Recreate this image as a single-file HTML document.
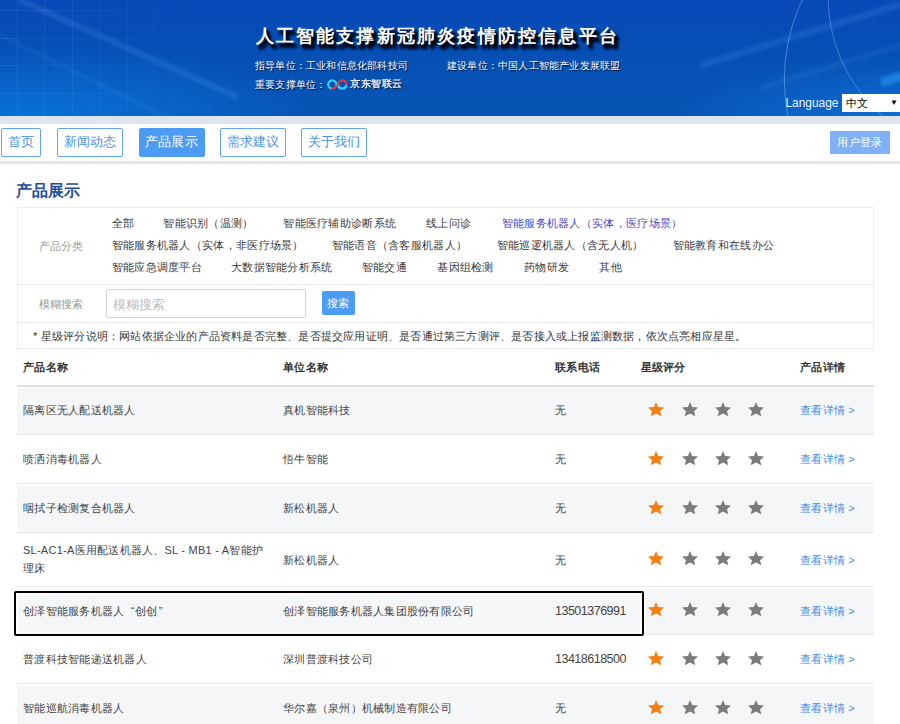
<!DOCTYPE html>
<html><head><meta charset="utf-8">
<style>
*{margin:0;padding:0;box-sizing:border-box}
html,body{width:900px;height:724px;overflow:hidden;background:#fff;font-family:"Liberation Sans",sans-serif;color:#333;position:relative}
#hdr{position:absolute;left:0;top:0;width:900px;height:116px;overflow:hidden;
 background:radial-gradient(ellipse 280px 75px at 30px 118px,rgba(10,120,225,.8),rgba(10,120,225,0)),radial-gradient(ellipse 220px 60px at 900px 116px,rgba(20,130,235,.55),rgba(20,130,235,0)),linear-gradient(180deg,#0848b8 0%,#0650b4 50%,#0656b6 100%)}
.gv{position:absolute;top:0;width:1px;height:116px;background:rgba(110,180,255,.14)}
.gh{position:absolute;left:0;width:200px;height:1px;background:linear-gradient(90deg,rgba(110,180,255,.14),rgba(110,180,255,0))}
.streak{position:absolute;height:4px;background:rgba(110,180,255,.16);filter:blur(1.5px);transform-origin:0 0}
.t{position:absolute;left:255.5px;top:22px;font-size:18px;letter-spacing:2.2px;font-weight:bold;color:#fff;text-shadow:4px 5px 3px #000614,3px 4px 3px #000614,2px 3px 2px rgba(0,0,20,.9);white-space:nowrap;line-height:28px}
.s{position:absolute;font-family:"Liberation Serif",serif;font-weight:500;font-size:10px;letter-spacing:.2px;color:#fff;white-space:nowrap;text-shadow:1px 1px 1px #001030;line-height:14px}
#lang{position:absolute;left:785.5px;top:95px;font-size:11.9px;color:#eef4ff;line-height:16px}
#sel{position:absolute;left:842px;top:94px;width:58px;height:18px;background:#fff;font-size:11px;color:#000;padding-left:4px;line-height:18px}
#strip{position:absolute;left:0;top:116px;width:900px;height:7.5px;background:#dfe5ee}
#navb{position:absolute;left:0;top:160.5px;width:900px;height:3.5px;background:#e2e7ee}
.nb{position:absolute;top:128px;height:28.5px;border:1px solid #62a4f2;border-radius:2px;color:#4a90e2;font-size:13px;letter-spacing:.2px;line-height:26px;text-align:center;white-space:nowrap}
.nb.on{background:#4d9cf3;border-color:#4d9cf3;color:#fff}
#login{position:absolute;left:830px;top:131px;width:60px;height:23px;background:#80b1f4;color:#fff;font-size:11px;letter-spacing:.3px;line-height:23px;text-align:center}
h2{position:absolute;left:16px;top:180px;font-size:16px;line-height:22px;color:#1f4f9a;font-weight:bold}
.box{position:absolute;left:17px;width:857px;border:1px solid #ececec}
.lbl{position:absolute;left:38.5px;font-size:11px;letter-spacing:.3px;color:#999;line-height:16px}
.cat{position:absolute;font-size:11px;letter-spacing:.3px;color:#3a3a3a;white-space:nowrap;line-height:16px}
.cat.sel{color:#4848cc}
#inp{position:absolute;left:106px;top:289px;width:199.5px;height:28.5px;border:1px solid #d2d3da;border-radius:2px;font-size:13px;color:#bbb;padding-left:6px;padding-top:2px;line-height:26px}
#btn{position:absolute;left:322px;top:291px;width:33px;height:24px;background:#4b9cf4;border-radius:2px;color:#fff;font-size:11px;letter-spacing:.3px;text-align:center;line-height:24px}
.note{position:absolute;left:33px;top:328px;font-size:11px;letter-spacing:.2px;color:#333;white-space:nowrap;line-height:16px}
.tr{position:absolute;left:17px;width:857px;border-bottom:1px solid #e8e8e8}
.tr.g{background:linear-gradient(#fff 0,#fff 2px,#f5f6f8 2px)}
.td{position:absolute;font-size:11px;letter-spacing:.25px;color:#444;white-space:nowrap;line-height:16px}
.th{position:absolute;top:359px;font-size:11px;letter-spacing:.3px;color:#333;font-weight:bold;line-height:16px}
.sw{position:absolute;width:17px;height:16px}
.sw svg{display:block}
.lk{color:#3f8dea}
.num{font-size:12.5px;letter-spacing:-.5px}
#hl{position:absolute;left:14px;top:591px;width:629.5px;height:44.5px;border:2.5px solid #000;border-radius:2px;box-shadow:0 0 0 1.5px rgba(255,255,255,.85),inset 0 0 0 1.5px rgba(255,255,255,.85)}
</style></head><body>
<div id="hdr">
 <div class="gv" style="left:16.7px;opacity:1"></div><div class="gv" style="left:44.2px;opacity:0.95"></div><div class="gv" style="left:71.7px;opacity:0.85"></div><div class="gv" style="left:99.2px;opacity:0.7"></div><div class="gv" style="left:126.7px;opacity:0.5"></div><div class="gv" style="left:154.2px;opacity:0.35"></div><div class="gv" style="left:181.7px;opacity:0.2"></div><div class="gv" style="left:209.2px;opacity:0.1"></div><div class="gh" style="top:9.7px"></div><div class="gh" style="top:37.5px"></div><div class="gh" style="top:65.2px"></div><div class="gh" style="top:93.0px"></div>
 <div class="streak" style="left:20px;top:-3px;width:240px;height:6px;transform:rotate(24deg)"></div>
 <div class="streak" style="left:-10px;top:28px;width:200px;height:5px;transform:rotate(26deg);opacity:.5"></div>
 <div class="streak" style="left:700px;top:62px;width:230px;transform:rotate(-17deg);height:7px;opacity:.9"></div>
 <div class="streak" style="left:760px;top:85px;width:170px;transform:rotate(-17deg);height:6px;opacity:.6"></div>
 <div class="streak" style="left:880px;top:78px;width:40px;transform:rotate(-17deg);height:9px;background:rgba(40,150,245,.6)"></div>
 <svg style="position:absolute;left:0;top:0" width="900" height="116">
  <circle cx="973" cy="80" r="188.7" fill="none" stroke="rgba(150,200,255,.45)" stroke-width="1"/>
  <circle cx="986" cy="-3.5" r="158" fill="none" stroke="rgba(150,200,255,.4)" stroke-width="1"/>
 </svg>
 <div class="t">人工智能支撑新冠肺炎疫情防控信息平台</div>
 <div class="s" style="left:255px;top:58.5px">指导单位：工业和信息化部科技司</div>
 <div class="s" style="left:447px;top:58.5px">建设单位：中国人工智能产业发展联盟</div>
 <div class="s" style="left:255px;top:77.5px">重要支撑单位：</div>
 <svg style="position:absolute;left:327px;top:79px" width="22" height="11" viewBox="0 0 22 11">
  <path d="M4.59 9.54 A4.1 4.1 0 1 1 9.34 6.21" fill="none" stroke="#2fd3f2" stroke-width="2.2"/>
  <path d="M9.34 6.21 A4.1 4.1 0 0 1 4.59 9.54" fill="none" stroke="#e9343f" stroke-width="2.2"/>
  <path d="M11.26 6.21 A4.1 4.1 0 1 1 19.34 6.21" fill="none" stroke="#e9343f" stroke-width="2.2"/>
  <path d="M19.34 6.21 A4.1 4.1 0 0 1 11.26 6.21" fill="none" stroke="#2fd3f2" stroke-width="2.2"/>
 </svg>
 <div class="s" style="left:350px;top:77px;font-family:'Liberation Sans',sans-serif;font-size:10px;letter-spacing:.6px;font-weight:bold;color:#e8f0ff">京东智联云</div>
 <div id="lang">Language</div>
 <div id="sel">中文<span style="position:absolute;left:48px;top:0;font-size:8px">▼</span></div>
</div>
<div id="strip"></div>
<div class="nb" style="left:1px;width:40px">首页</div>
<div class="nb" style="left:57px;width:66px">新闻动态</div>
<div class="nb on" style="left:138.5px;width:66px">产品展示</div>
<div class="nb" style="left:220px;width:66px">需求建议</div>
<div class="nb" style="left:301px;width:66px">关于我们</div>
<div id="login">用户登录</div>
<div id="navb"></div>
<h2>产品展示</h2>
<div class="box" style="top:207px;height:142px"></div>
<div style="position:absolute;left:18px;top:284px;width:855px;height:1px;background:#ececec"></div>
<div style="position:absolute;left:18px;top:322px;width:855px;height:1px;background:#ececec"></div>
<div class="lbl" style="top:238px">产品分类</div>
<div class="cat" style="left:111.7px;top:215px">全部</div>
<div class="cat" style="left:163.3px;top:215px">智能识别（温测）</div>
<div class="cat" style="left:283.3px;top:215px">智能医疗辅助诊断系统</div>
<div class="cat" style="left:426px;top:215px">线上问诊</div>
<div class="cat sel" style="left:501.7px;top:215px">智能服务机器人（实体，医疗场景）</div>
<div class="cat" style="left:111.7px;top:237px">智能服务机器人（实体，非医疗场景）</div>
<div class="cat" style="left:331.7px;top:237px">智能语音（含客服机器人）</div>
<div class="cat" style="left:496.7px;top:237px">智能巡逻机器人（含无人机）</div>
<div class="cat" style="left:672.5px;top:237px">智能教育和在线办公</div>
<div class="cat" style="left:111.7px;top:259px">智能应急调度平台</div>
<div class="cat" style="left:231px;top:259px">大数据智能分析系统</div>
<div class="cat" style="left:361.7px;top:259px">智能交通</div>
<div class="cat" style="left:437.3px;top:259px">基因组检测</div>
<div class="cat" style="left:524px;top:259px">药物研发</div>
<div class="cat" style="left:599.3px;top:259px">其他</div>
<div class="lbl" style="top:296px">模糊搜索</div>
<div id="inp">模糊搜索</div>
<div id="btn">搜索</div>
<div class="note">* 星级评分说明：网站依据企业的产品资料是否完整、是否提交应用证明、是否通过第三方测评、是否接入或上报监测数据，依次点亮相应星星。</div>
<div class="th" style="left:23px">产品名称</div>
<div class="th" style="left:283px">单位名称</div>
<div class="th" style="left:555px">联系电话</div>
<div class="th" style="left:640.5px">星级评分</div>
<div class="th" style="left:800px">产品详情</div>
<div class="tr g" style="top:386px;height:49px"><div class="td" style="left:6px;top:16.0px">隔离区无人配送机器人</div><div class="td" style="left:266px;top:16.0px">真机智能科技</div><div class="td" style="left:538px;top:16.0px">无</div><div class="sw" style="left:631.0px;top:15.7px"><svg viewBox="0 0 16 14.5" width="16" height="14.5"><polygon points="8,0 10.1,5 16,5.4 12,9.3 13.3,14.3 8,11.6 2.7,14.3 4,9.3 0,5.4 5.9,5" fill="#f67f12"/></svg></div><div class="sw" style="left:664.6px;top:15.7px"><svg viewBox="0 0 16 14.5" width="16" height="14.5"><polygon points="8,0 10.1,5 16,5.4 12,9.3 13.3,14.3 8,11.6 2.7,14.3 4,9.3 0,5.4 5.9,5" fill="#7c7c7c"/></svg></div><div class="sw" style="left:698.0px;top:15.7px"><svg viewBox="0 0 16 14.5" width="16" height="14.5"><polygon points="8,0 10.1,5 16,5.4 12,9.3 13.3,14.3 8,11.6 2.7,14.3 4,9.3 0,5.4 5.9,5" fill="#7c7c7c"/></svg></div><div class="sw" style="left:731.4px;top:15.7px"><svg viewBox="0 0 16 14.5" width="16" height="14.5"><polygon points="8,0 10.1,5 16,5.4 12,9.3 13.3,14.3 8,11.6 2.7,14.3 4,9.3 0,5.4 5.9,5" fill="#7c7c7c"/></svg></div><div class="td lk" style="left:783px;top:16.0px">查看详情 &gt;</div></div>
<div class="tr" style="top:435px;height:49px"><div class="td" style="left:6px;top:16.0px">喷洒消毒机器人</div><div class="td" style="left:266px;top:16.0px">悟牛智能</div><div class="td" style="left:538px;top:16.0px">无</div><div class="sw" style="left:631.0px;top:15.7px"><svg viewBox="0 0 16 14.5" width="16" height="14.5"><polygon points="8,0 10.1,5 16,5.4 12,9.3 13.3,14.3 8,11.6 2.7,14.3 4,9.3 0,5.4 5.9,5" fill="#f67f12"/></svg></div><div class="sw" style="left:664.6px;top:15.7px"><svg viewBox="0 0 16 14.5" width="16" height="14.5"><polygon points="8,0 10.1,5 16,5.4 12,9.3 13.3,14.3 8,11.6 2.7,14.3 4,9.3 0,5.4 5.9,5" fill="#7c7c7c"/></svg></div><div class="sw" style="left:698.0px;top:15.7px"><svg viewBox="0 0 16 14.5" width="16" height="14.5"><polygon points="8,0 10.1,5 16,5.4 12,9.3 13.3,14.3 8,11.6 2.7,14.3 4,9.3 0,5.4 5.9,5" fill="#7c7c7c"/></svg></div><div class="sw" style="left:731.4px;top:15.7px"><svg viewBox="0 0 16 14.5" width="16" height="14.5"><polygon points="8,0 10.1,5 16,5.4 12,9.3 13.3,14.3 8,11.6 2.7,14.3 4,9.3 0,5.4 5.9,5" fill="#7c7c7c"/></svg></div><div class="td lk" style="left:783px;top:16.0px">查看详情 &gt;</div></div>
<div class="tr g" style="top:484px;height:49px"><div class="td" style="left:6px;top:16.0px">咽拭子检测复合机器人</div><div class="td" style="left:266px;top:16.0px">新松机器人</div><div class="td" style="left:538px;top:16.0px">无</div><div class="sw" style="left:631.0px;top:15.7px"><svg viewBox="0 0 16 14.5" width="16" height="14.5"><polygon points="8,0 10.1,5 16,5.4 12,9.3 13.3,14.3 8,11.6 2.7,14.3 4,9.3 0,5.4 5.9,5" fill="#f67f12"/></svg></div><div class="sw" style="left:664.6px;top:15.7px"><svg viewBox="0 0 16 14.5" width="16" height="14.5"><polygon points="8,0 10.1,5 16,5.4 12,9.3 13.3,14.3 8,11.6 2.7,14.3 4,9.3 0,5.4 5.9,5" fill="#7c7c7c"/></svg></div><div class="sw" style="left:698.0px;top:15.7px"><svg viewBox="0 0 16 14.5" width="16" height="14.5"><polygon points="8,0 10.1,5 16,5.4 12,9.3 13.3,14.3 8,11.6 2.7,14.3 4,9.3 0,5.4 5.9,5" fill="#7c7c7c"/></svg></div><div class="sw" style="left:731.4px;top:15.7px"><svg viewBox="0 0 16 14.5" width="16" height="14.5"><polygon points="8,0 10.1,5 16,5.4 12,9.3 13.3,14.3 8,11.6 2.7,14.3 4,9.3 0,5.4 5.9,5" fill="#7c7c7c"/></svg></div><div class="td lk" style="left:783px;top:16.0px">查看详情 &gt;</div></div>
<div class="tr" style="top:533px;height:54px"><div class="td" style="left:6px;top:9.0px;line-height:17.5px">SL-AC1-A医用配送机器人、SL - MB1 - A智能护<br>理床</div><div class="td" style="left:266px;top:18.5px">新松机器人</div><div class="td" style="left:538px;top:18.5px">无</div><div class="sw" style="left:631.0px;top:18.2px"><svg viewBox="0 0 16 14.5" width="16" height="14.5"><polygon points="8,0 10.1,5 16,5.4 12,9.3 13.3,14.3 8,11.6 2.7,14.3 4,9.3 0,5.4 5.9,5" fill="#f67f12"/></svg></div><div class="sw" style="left:664.6px;top:18.2px"><svg viewBox="0 0 16 14.5" width="16" height="14.5"><polygon points="8,0 10.1,5 16,5.4 12,9.3 13.3,14.3 8,11.6 2.7,14.3 4,9.3 0,5.4 5.9,5" fill="#7c7c7c"/></svg></div><div class="sw" style="left:698.0px;top:18.2px"><svg viewBox="0 0 16 14.5" width="16" height="14.5"><polygon points="8,0 10.1,5 16,5.4 12,9.3 13.3,14.3 8,11.6 2.7,14.3 4,9.3 0,5.4 5.9,5" fill="#7c7c7c"/></svg></div><div class="sw" style="left:731.4px;top:18.2px"><svg viewBox="0 0 16 14.5" width="16" height="14.5"><polygon points="8,0 10.1,5 16,5.4 12,9.3 13.3,14.3 8,11.6 2.7,14.3 4,9.3 0,5.4 5.9,5" fill="#7c7c7c"/></svg></div><div class="td lk" style="left:783px;top:18.5px">查看详情 &gt;</div></div>
<div class="tr g" style="top:587px;height:48px"><div class="td" style="left:6px;top:15.5px">创泽智能服务机器人<span style="margin-left:6.5px">“</span>创创<span style="margin-left:1.5px">”</span></div><div class="td" style="left:266px;top:15.5px">创泽智能服务机器人集团股份有限公司</div><div class="td" style="left:538px;top:15.5px"><span class="num">13501376991</span></div><div class="sw" style="left:631.0px;top:15.2px"><svg viewBox="0 0 16 14.5" width="16" height="14.5"><polygon points="8,0 10.1,5 16,5.4 12,9.3 13.3,14.3 8,11.6 2.7,14.3 4,9.3 0,5.4 5.9,5" fill="#f67f12"/></svg></div><div class="sw" style="left:664.6px;top:15.2px"><svg viewBox="0 0 16 14.5" width="16" height="14.5"><polygon points="8,0 10.1,5 16,5.4 12,9.3 13.3,14.3 8,11.6 2.7,14.3 4,9.3 0,5.4 5.9,5" fill="#7c7c7c"/></svg></div><div class="sw" style="left:698.0px;top:15.2px"><svg viewBox="0 0 16 14.5" width="16" height="14.5"><polygon points="8,0 10.1,5 16,5.4 12,9.3 13.3,14.3 8,11.6 2.7,14.3 4,9.3 0,5.4 5.9,5" fill="#7c7c7c"/></svg></div><div class="sw" style="left:731.4px;top:15.2px"><svg viewBox="0 0 16 14.5" width="16" height="14.5"><polygon points="8,0 10.1,5 16,5.4 12,9.3 13.3,14.3 8,11.6 2.7,14.3 4,9.3 0,5.4 5.9,5" fill="#7c7c7c"/></svg></div><div class="td lk" style="left:783px;top:15.5px">查看详情 &gt;</div></div>
<div class="tr" style="top:635px;height:49px"><div class="td" style="left:6px;top:16.0px">普渡科技智能递送机器人</div><div class="td" style="left:266px;top:16.0px">深圳普渡科技公司</div><div class="td" style="left:538px;top:16.0px"><span class="num">13418618500</span></div><div class="sw" style="left:631.0px;top:15.7px"><svg viewBox="0 0 16 14.5" width="16" height="14.5"><polygon points="8,0 10.1,5 16,5.4 12,9.3 13.3,14.3 8,11.6 2.7,14.3 4,9.3 0,5.4 5.9,5" fill="#f67f12"/></svg></div><div class="sw" style="left:664.6px;top:15.7px"><svg viewBox="0 0 16 14.5" width="16" height="14.5"><polygon points="8,0 10.1,5 16,5.4 12,9.3 13.3,14.3 8,11.6 2.7,14.3 4,9.3 0,5.4 5.9,5" fill="#7c7c7c"/></svg></div><div class="sw" style="left:698.0px;top:15.7px"><svg viewBox="0 0 16 14.5" width="16" height="14.5"><polygon points="8,0 10.1,5 16,5.4 12,9.3 13.3,14.3 8,11.6 2.7,14.3 4,9.3 0,5.4 5.9,5" fill="#7c7c7c"/></svg></div><div class="sw" style="left:731.4px;top:15.7px"><svg viewBox="0 0 16 14.5" width="16" height="14.5"><polygon points="8,0 10.1,5 16,5.4 12,9.3 13.3,14.3 8,11.6 2.7,14.3 4,9.3 0,5.4 5.9,5" fill="#7c7c7c"/></svg></div><div class="td lk" style="left:783px;top:16.0px">查看详情 &gt;</div></div>
<div class="tr g" style="top:684px;height:49px"><div class="td" style="left:6px;top:16.0px">智能巡航消毒机器人</div><div class="td" style="left:266px;top:16.0px">华尔嘉（泉州）机械制造有限公司</div><div class="td" style="left:538px;top:16.0px">无</div><div class="sw" style="left:631.0px;top:15.7px"><svg viewBox="0 0 16 14.5" width="16" height="14.5"><polygon points="8,0 10.1,5 16,5.4 12,9.3 13.3,14.3 8,11.6 2.7,14.3 4,9.3 0,5.4 5.9,5" fill="#f67f12"/></svg></div><div class="sw" style="left:664.6px;top:15.7px"><svg viewBox="0 0 16 14.5" width="16" height="14.5"><polygon points="8,0 10.1,5 16,5.4 12,9.3 13.3,14.3 8,11.6 2.7,14.3 4,9.3 0,5.4 5.9,5" fill="#7c7c7c"/></svg></div><div class="sw" style="left:698.0px;top:15.7px"><svg viewBox="0 0 16 14.5" width="16" height="14.5"><polygon points="8,0 10.1,5 16,5.4 12,9.3 13.3,14.3 8,11.6 2.7,14.3 4,9.3 0,5.4 5.9,5" fill="#7c7c7c"/></svg></div><div class="sw" style="left:731.4px;top:15.7px"><svg viewBox="0 0 16 14.5" width="16" height="14.5"><polygon points="8,0 10.1,5 16,5.4 12,9.3 13.3,14.3 8,11.6 2.7,14.3 4,9.3 0,5.4 5.9,5" fill="#7c7c7c"/></svg></div><div class="td lk" style="left:783px;top:16.0px">查看详情 &gt;</div></div>
<div style="position:absolute;left:17px;top:385px;width:857px;height:2px;background:#dde0e5"></div>
<div id="hl"></div>
</body></html>
